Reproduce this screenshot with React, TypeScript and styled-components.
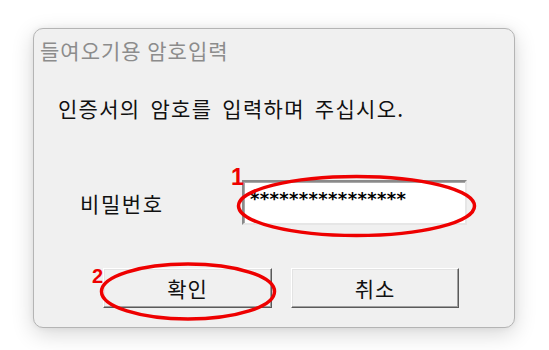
import React from "react";
import styled, { createGlobalStyle } from "styled-components";

const Global = createGlobalStyle`
  html, body { margin: 0; padding: 0; background: #ffffff; }
  body { width: 549px; height: 350px; overflow: hidden; }
`;

const Page = styled.div`
  position: relative;
  width: 549px;
  height: 350px;
  padding: 28px 0 0 33px;
  box-sizing: border-box;
  font-family: "Noto Sans CJK KR", "Noto Sans", sans-serif;
`;

const Dialog = styled.div`
  width: 482px;
  height: 300px;
  box-sizing: border-box;
  border: 1px solid #b4b4b4;
  border-radius: 10px;
  background: #f0f0f0;
  box-shadow: 0 6px 22px rgba(0, 0, 0, 0.16), 0 0 6px rgba(0, 0, 0, 0.06);
  display: flex;
  flex-direction: column;
`;

const Title = styled.div`
  padding: 8px 0 0 6px;
  font-size: 21px;
  line-height: 26px;
  color: #8c8c8c;
  letter-spacing: 1px;
`;

const Message = styled.div`
  margin-top: 32px;
  padding-left: 24px;
  font-size: 21px;
  line-height: 26px;
  color: #111;
  letter-spacing: 1.3px;
  word-spacing: 4px;
`;

const FieldRow = styled.div`
  margin-top: 59px;
  padding-left: 46px;
  display: flex;
  align-items: center;
`;

const Label = styled.div`
  width: 162px;
  font-size: 21px;
  line-height: 26px;
  color: #111;
  letter-spacing: 1.6px;
`;

const PasswordBox = styled.div`
  width: 225px;
  height: 45px;
  box-sizing: border-box;
  border: 2px solid;
  border-color: #8a8a8a #e6e6e6 #e6e6e6 #8a8a8a;
  box-shadow: inset 1px 1px 0 #a8a8a8;
  background: #ffffff;
  padding: 6px 0 0 6px;
  font-family: "DejaVu Sans", sans-serif;
  font-weight: bold;
  font-size: 18px;
  line-height: 22px;
  letter-spacing: 0.35px;
  color: #000;
`;

const ButtonRow = styled.div`
  margin-top: 43px;
  padding-left: 69px;
  display: flex;
  gap: 19px;
`;

const Button = styled.button<{ $w: number }>`
  width: ${(p) => p.$w}px;
  height: 40px;
  box-sizing: border-box;
  margin: 0;
  padding: 0;
  background: #f0f0f0;
  border: 1px solid;
  border-color: #ffffff #5a5a5a #5a5a5a #ffffff;
  box-shadow: inset -1px -1px 0 #a0a0a0, inset 1px 1px 0 #e3e3e3;
  font-family: "Noto Sans CJK KR", "Noto Sans", sans-serif;
  font-size: 21px;
  line-height: 26px;
  color: #111;
  letter-spacing: 1px;
`;

const Overlay = styled.svg`
  position: absolute;
  left: 0;
  top: 0;
  pointer-events: none;
`;

const Mark = styled.text`
  font-family: "Liberation Sans", Arial, sans-serif;
  font-weight: bold;
  fill: #ee0000;
`;

export default function App() {
  return (
    <>
      <Global />
      <Page>
        <Dialog>
          <Title>들여오기용 암호입력</Title>
          <Message>인증서의 암호를 입력하며 주십시오.</Message>
          <FieldRow>
            <Label>비밀번호</Label>
            <PasswordBox>****************</PasswordBox>
          </FieldRow>
          <ButtonRow>
            <Button $w={169}>확인</Button>
            <Button $w={168}>취소</Button>
          </ButtonRow>
        </Dialog>
        <Overlay width="549" height="350" viewBox="0 0 549 350">
          <ellipse cx="356.5" cy="206" rx="118" ry="29.5" fill="none" stroke="#ee0000" strokeWidth="3.5" />
          <ellipse cx="188" cy="291.5" rx="86.5" ry="27.5" fill="none" stroke="#ee0000" strokeWidth="3.5" />
          <Mark x="231" y="185" fontSize="23">1</Mark>
          <Mark x="92" y="283" fontSize="20">2</Mark>
        </Overlay>
      </Page>
    </>
  );
}
